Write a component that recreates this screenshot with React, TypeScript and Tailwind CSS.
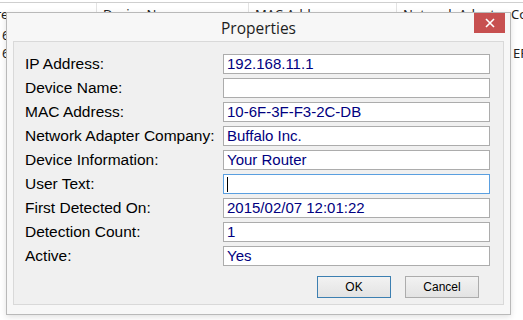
import React from 'react';

const fields: { label: string; value: string; focused?: boolean }[] = [
  { label: 'IP Address:', value: '192.168.11.1' },
  { label: 'Device Name:', value: '' },
  { label: 'MAC Address:', value: '10-6F-3F-F3-2C-DB' },
  { label: 'Network Adapter Company:', value: 'Buffalo Inc.' },
  { label: 'Device Information:', value: 'Your Router' },
  { label: 'User Text:', value: '', focused: true },
  { label: 'First Detected On:', value: '2015/02/07 12:01:22' },
  { label: 'Detection Count:', value: '1' },
  { label: 'Active:', value: 'Yes' },
];

function ListBehind() {
  return (
    <div className="w-[523px] h-[320px] bg-white overflow-hidden font-['Noto_Sans',sans-serif] text-[13px] text-[#222]">
      <div className="mt-[2px] border-t border-[#cfcfcf] flex h-[25px] items-center whitespace-nowrap">
        <div className="w-[97px] overflow-hidden border-r border-[#e3e3e3] h-full flex items-center">
          <span className="-ml-[44px]">IP Address</span>
        </div>
        <div className="w-[152px] overflow-hidden border-r border-[#e3e3e3] h-full flex items-center pl-[6px]">Device Name</div>
        <div className="w-[148px] overflow-hidden border-r border-[#e3e3e3] h-full flex items-center pl-[6px]">MAC Address</div>
        <div className="flex-1 overflow-hidden h-full flex items-center pl-[6px]">Network Adapter Company</div>
      </div>
      <div className="flex h-[18px] items-center whitespace-nowrap">
        <div className="w-[97px] overflow-hidden"><span className="ml-[2px]">6</span></div>
      </div>
      <div className="flex h-[18px] items-center whitespace-nowrap">
        <div className="w-[97px] overflow-hidden"><span className="ml-[2px]">6</span></div>
        <div className="flex-1 overflow-hidden pl-[416px]">EF</div>
      </div>
    </div>
  );
}

export default function App() {
  return (
    <div className="relative w-[523px] h-[320px] overflow-hidden">
      <ListBehind />

      {/* dialog */}
      <div className="absolute left-[6px] top-[12px] w-[505px] h-[303px] bg-[#f7f7f7] border border-[#b9b9b9] shadow-[0_2px_6px_rgba(0,0,0,0.12)] flex flex-col">
        <div className="grid grid-cols-[1fr_auto_1fr] h-[28px] items-start">
          <div />
          <div className="pt-[5px] font-['Open_Sans',sans-serif] text-[15.5px] leading-[20px] text-[#1e1e1e]">Properties</div>
          <div className="flex justify-end pr-[5px]">
            <div className="w-[31px] h-[20px] bg-[#c75050] flex items-center justify-center">
              <svg width="10" height="10" viewBox="0 0 10 10">
                <path d="M1 1 L9 9 M9 1 L1 9" stroke="#ffffff" strokeWidth="1.6" />
              </svg>
            </div>
          </div>
        </div>

        <div className="mx-[6px] h-[264px] border border-[#d9d9d9] bg-[#f0f0f0] pt-[12px] pl-[11px] font-['Liberation_Sans',Arial,sans-serif]">
          <div className="grid grid-cols-[198px_267px] gap-y-[4px]">
            {fields.map((f) => (
              <React.Fragment key={f.label}>
                <div className="h-[20px] flex items-center text-[15.5px] text-black whitespace-nowrap">{f.label}</div>
                <div
                  className={`h-[20px] bg-white border flex items-center pl-[3px] text-[15px] text-[#000080] whitespace-nowrap ${
                    f.focused ? 'border-[#5a9fe0]' : 'border-[#acacac]'
                  }`}
                >
                  {f.focused ? <span className="w-[1px] h-[15px] bg-black" /> : f.value}
                </div>
              </React.Fragment>
            ))}
          </div>
          <div className="flex justify-end gap-[14px] pr-[24px] mt-[10px]">
            <button className="w-[74px] h-[22px] border border-[#3c7fb1] bg-gradient-to-b from-[#f2f2f2] to-[#e3e3e3] text-[12px] text-black">
              OK
            </button>
            <button className="w-[74px] h-[22px] border border-[#acacac] bg-gradient-to-b from-[#f2f2f2] to-[#e3e3e3] text-[12px] text-black">
              Cancel
            </button>
          </div>
        </div>
      </div>
    </div>
  );
}
